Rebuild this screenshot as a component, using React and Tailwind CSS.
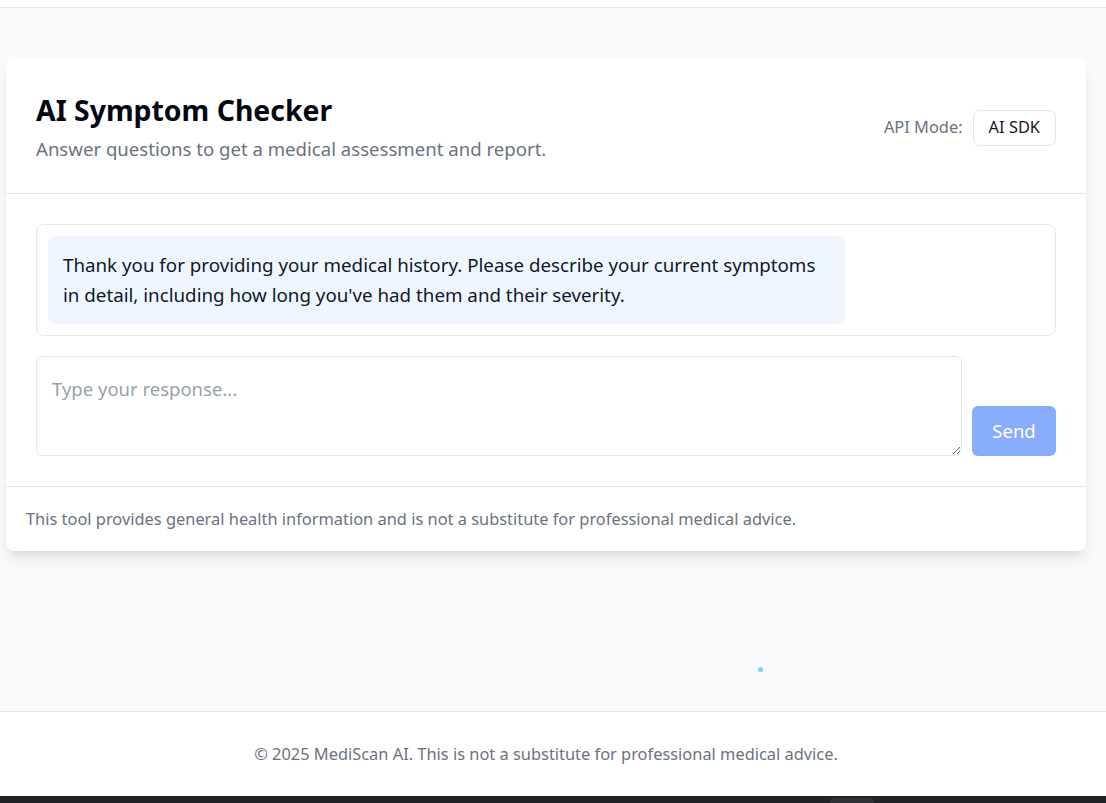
export default function App() {
  return (
    <div className="w-[1106px] h-[803px] flex flex-col bg-[#f9fafb] overflow-hidden relative font-['Noto_Sans',sans-serif]">
      <div className="h-[8px] bg-white border-b border-gray-200 shrink-0" />
      <div className="flex-1 w-[1092px] pt-[50px]">
        <div className="ml-[6px] w-[1080px] bg-white rounded-lg shadow-lg">
          <div className="flex items-center justify-between px-[30px] pt-[34px] pb-[30px] border-b border-gray-200">
            <div>
              <h1 className="text-[28.4px] leading-9 font-bold text-gray-950">AI Symptom Checker</h1>
              <p className="mt-[7px] text-[18.6px] leading-7 text-gray-500">Answer questions to get a medical assessment and report.</p>
            </div>
            <div className="flex items-center gap-[10px]">
              <span className="text-[16.4px] text-gray-500">API Mode:</span>
              <span className="h-[36px] px-[15px] flex items-center border border-gray-200 rounded-md text-[16.4px] text-gray-900">AI SDK</span>
            </div>
          </div>
          <div className="px-[30px] pt-[30px] pb-[30px]">
            <div className="border border-gray-200 rounded-lg p-[11px]">
              <div className="max-w-[80%] bg-blue-50 rounded-lg px-[15px] py-[14px] text-[18.75px] leading-[30px] text-gray-900">
                Thank you for providing your medical history. Please describe your current symptoms in detail, including how long you've had them and their severity.
              </div>
            </div>
            <div className="mt-5 flex items-end gap-[10px]">
              <textarea
                placeholder="Type your response..."
                className="flex-1 h-[100px] border border-gray-200 rounded-md px-[15px] py-[18px] text-[18.5px] text-gray-900 placeholder:text-gray-400 outline-none"
              />
              <button className="w-[84px] h-[50px] rounded-md bg-blue-600 opacity-50 text-white text-[18.5px]">Send</button>
            </div>
          </div>
          <div className="border-t border-gray-200 px-5 py-5 text-[16.4px] leading-6 text-gray-500">
            This tool provides general health information and is not a substitute for professional medical advice.
          </div>
        </div>
      </div>
      <div className="absolute left-[758px] top-[667px] w-[5px] h-[5px] rounded-full bg-sky-300" />
      <div className="shrink-0 bg-white border-t border-gray-200 py-[30px]">
        <div className="w-[1092px] text-center text-[16.4px] leading-6 text-gray-500">
          © 2025 MediScan AI. This is not a substitute for professional medical advice.
        </div>
      </div>
      <div className="shrink-0 h-[7px] bg-[#202326] relative">
        <div className="absolute left-[830px] top-[2px] w-[44px] h-[5px] bg-[#2f3236] rounded-t-sm" />
      </div>
    </div>
  );
}
